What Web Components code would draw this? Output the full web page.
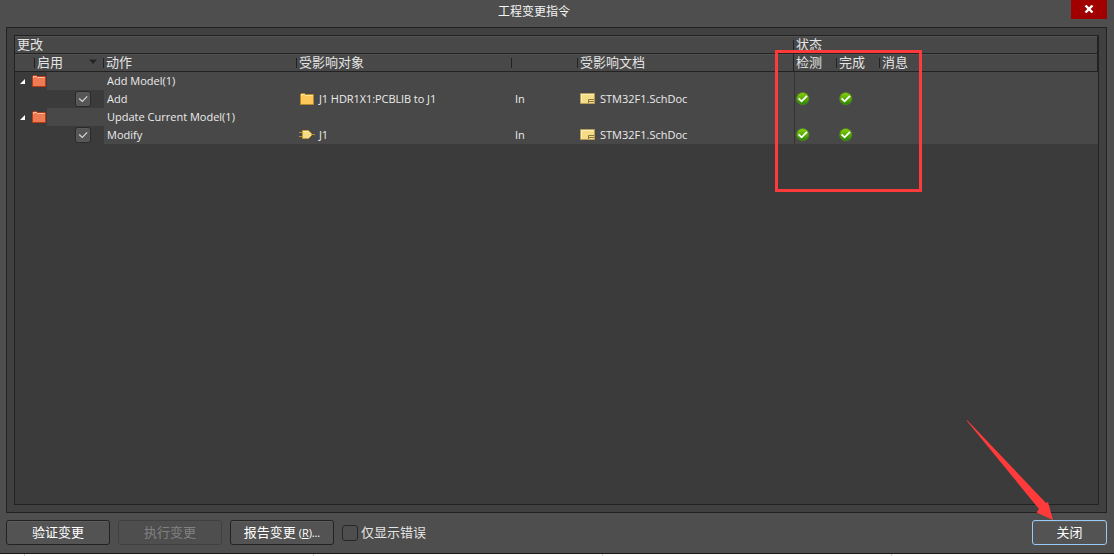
<!DOCTYPE html>
<html lang="zh-CN">
<head>
<meta charset="utf-8">
<title>工程变更指令</title>
<style>
  html, body {
    margin: 0;
    height: 100%;
    overflow: hidden;
  }

  body {
    font-family: "Noto Sans CJK SC", sans-serif;
    font-size: 13px;
    color: #e4e4e4;
    background: #4e4e4e;
  }
</style>
</head>
<body>
<eco-dialog></eco-dialog>

<script>
  const ICONS = {
    folderRed: `<svg width="14" height="12" viewBox="0 0 14 12">
      <path d="M.5 11.5V1.5l1-1h3l1 1h8v10z" fill="#ed7c55" stroke="#b93a16"/>
      <path d="M1.5 3V1.5h3l1 1h7" fill="none" stroke="#ffc0a0"/></svg>`,
    folderYellow: `<svg width="14" height="12" viewBox="0 0 14 12">
      <path d="M.5 11.5v-10l1-1h3l1 1h8v10z" fill="#ffc85a" stroke="#b58a2c"/>
      <path d="M1.5 3V1.5h3l1 1h7" fill="none" stroke="#ffe6a0"/></svg>`,
    part: `<svg width="16" height="10" viewBox="0 0 16 10">
      <path d="M0 2.5h4M0 6.5h4M12 4.5h4" stroke="#b88f2c"/>
      <path d="M3.5.5h6l3 3v2l-3 3h-6z" fill="#f5dc86" stroke="#c49a36"/>
      <path d="M4.5 2V1.5h4" fill="none" stroke="#fff2bc"/></svg>`,
    sheet: `<svg width="15" height="11" viewBox="0 0 15 11">
      <path d="M.5.5h14v10H.5z" fill="#f4db86" stroke="#b49c5c"/>
      <path d="M1.5 9V1.5h12" fill="none" stroke="#fff0b8"/>
      <path d="M8.5 10V6.5H14M9 8.5h5" fill="none" stroke="#8b7440"/></svg>`,
    ok: `<svg width="14" height="14" viewBox="0 0 14 14">
      <defs><linearGradient id="g" x2="0" y2="1"><stop stop-color="#8bd10a"/><stop offset="1" stop-color="#258500"/></linearGradient></defs>
      <circle cx="6.7" cy="6.7" r="6.2" fill="url(#g)" stroke="#4f7f28" stroke-width=".8"/>
      <path d="M2.6 6.3l3 3L11 3.9" fill="none" stroke="#fff" stroke-width="1.8"/></svg>`,
    expanded: `<svg width="5" height="5" viewBox="0 0 5 5"><path d="M5 0v5H0z" fill="#fff"/></svg>`,
    sort: `<svg width="8" height="5" viewBox="0 0 8 5"><path d="M0 .5h8L4 5z" fill="#242424"/></svg>`
  };

  class EcoIcon extends HTMLElement {
    connectedCallback() {
      this.attachShadow({ mode: 'open' }).innerHTML = `
        <style>
          :host { display: inline-flex; flex: none; }
          svg { display: block; }
        </style>
        ${ICONS[this.getAttribute('name')]}
      `;
    }
  }

  class EcoCheck extends HTMLElement {
    connectedCallback() {
      const checked = this.hasAttribute('checked');
      this.attachShadow({ mode: 'open' }).innerHTML = `
        <style>
          :host {
            display: inline-flex;
            flex: none;
            box-sizing: border-box;
            width: 16px;
            height: 16px;
            border: 1px solid #262626;
            border-radius: 3px;
            background: #4e4e4e;
          }
          :host([checked]) {
            border-color: #292929;
            background: #555;
            box-shadow: inset 0 0 0 .5px #626262;
          }
        </style>
        ${checked ? '<svg width="14" height="14" viewBox="0 0 14 14"><path d="M3.2 6.5l3.1 2.9 4.9-5" fill="none" stroke="#d6d6d6" stroke-width="1.2"/></svg>' : ''}
      `;
    }
  }

  class EcoButton extends HTMLElement {
    connectedCallback() {
      this.attachShadow({ mode: 'open' }).innerHTML = `
        <style>
          :host {
            display: flex;
            align-items: center;
            justify-content: center;
            box-sizing: border-box;
            width: 104px;
            height: 25px;
            border: 1px solid #222;
            border-radius: 3px;
            background: #535353;
            box-shadow: inset 0 1px #5d5d5d;
            color: #fff;
          }
          :host([disabled]) {
            border-color: #414141;
            background: #4e4e4e;
            box-shadow: none;
            color: #818181;
          }
          :host([primary]) {
            width: 75px;
            border-color: #99c9f5;
          }
          span {
            height: 25px;
            line-height: 23px;
            white-space: nowrap;
          }
        </style>
        <span><slot></slot></span>
      `;
    }
  }

  // One header cell: a short divider on its left edge, then the caption
  class EcoHead extends HTMLElement {
    connectedCallback() {
      this.attachShadow({ mode: 'open' }).innerHTML = `
        <style>
          :host {
            display: flex;
            align-items: center;
            box-sizing: border-box;
            height: 17px;
            padding-left: 3px;
            line-height: 15px;
            padding-bottom: 2px;
            white-space: nowrap;
            background: linear-gradient(#222, #222) 0 4px / 1px 10px no-repeat;
          }
          :host([plain]) { background: none; padding-left: 2px; }
          :host([full]) { background-size: 1px 17px; background-position: 0 0; }
        </style>
        <slot></slot>
      `;
    }
  }

  class EcoRow extends HTMLElement {
    connectedCallback() {
      const group = this.hasAttribute('group');
      const lead = group
        ? '<eco-icon name="expanded"></eco-icon><eco-icon name="folderRed"></eco-icon>'
        : '<eco-check checked></eco-check>';
      this.attachShadow({ mode: 'open' }).innerHTML = `
        <style>
          :host {
            display: grid;
            grid-template-columns: 89px 193px 215px 65px 217px 43px 43px 1fr;
            height: 18px;
            font-family: "Open Sans", "Noto Sans CJK SC", sans-serif;
            font-size: 11px;
            line-height: 18px;
            color: #ececec;
            background: #484848;
            white-space: nowrap;
          }
          .lead {
            display: flex;
            align-items: center;
            box-sizing: border-box;
            padding-left: 60px;
            background: #3b3b3b;
          }
          :host([group]) .lead {
            width: 32px;
            padding-left: 5px;
            gap: 7px;
          }
          .cell {
            display: flex;
            align-items: center;
            gap: 5px;
            padding-left: 3px;
          }
          .object { letter-spacing: -.08px; }
          .part { padding-left: 2px; gap: 4px; }
          .status { padding-left: 2px; }
          .first { padding-left: 1px; border-left: 1px solid #333; }
          .doc ::slotted(eco-icon) { margin-top: -1px; }
        </style>
        <div class="lead">${lead}</div>
        <div class="cell"><slot></slot></div>
        <div class="cell object ${this.hasAttribute('part') ? 'part' : ''}"><slot name="object"></slot></div>
        <div class="cell"><slot name="relation"></slot></div>
        <div class="cell doc"><slot name="doc"></slot></div>
        <div class="cell status first"><slot name="check"></slot></div>
        <div class="cell status"><slot name="done"></slot></div>
        <div class="cell"></div>
      `;
    }
  }

  class EcoGrid extends HTMLElement {
    connectedCallback() {
      this.attachShadow({ mode: 'open' }).innerHTML = `
        <style>
          :host {
            display: flex;
            flex-direction: column;
            flex: 1;
            border: 1px solid #222;
            background: #3b3b3b;
          }
          .head {
            display: grid;
            height: 17px;
            border-right: 1px solid #222;
            border-bottom: 1px solid #222;
            background: #484848;
            box-shadow: inset 0 1px #525252;
          }
          .bands { grid-template-columns: 778px 1fr; }
          .columns { grid-template-columns: 19px 69px 193px 215px 66px 216px 43px 43px 1fr; }
          .sort { margin-left: auto; margin-right: 6px; }
        </style>
        <div class="head bands">
          <eco-head plain>更改</eco-head>
          <eco-head>状态</eco-head>
        </div>
        <div class="head columns">
          <eco-head plain></eco-head>
          <eco-head>启用<eco-icon class="sort" name="sort"></eco-icon></eco-head>
          <eco-head>动作</eco-head>
          <eco-head>受影响对象</eco-head>
          <eco-head></eco-head>
          <eco-head>受影响文档</eco-head>
          <eco-head full>检测</eco-head>
          <eco-head>完成</eco-head>
          <eco-head>消息</eco-head>
        </div>
        <slot></slot>
      `;
    }
  }

  class EcoDialog extends HTMLElement {
    connectedCallback() {
      this.attachShadow({ mode: 'open' }).innerHTML = `
        <style>
          :host {
            display: flex;
            flex-direction: column;
            position: relative;
            height: 556px;
          }
          header {
            display: grid;
            grid-template-columns: 1fr auto 1fr;
            height: 27px;
            font-size: 12px;
            line-height: 22px;
            color: #f4f4f4;
          }
          .title { grid-column: 2; padding-right: 46px; }
          .close {
            justify-self: end;
            display: flex;
            align-items: center;
            justify-content: center;
            width: 36px;
            height: 19px;
            margin-right: 7px;
            background: #a00000;
          }
          .panel {
            display: flex;
            box-sizing: border-box;
            height: 486px;
            margin: 0 7px 0 6px;
            padding: 7px;
            border: 1px solid #222;
            background: #404040;
          }
          footer {
            display: flex;
            align-items: center;
            gap: 8px;
            height: 25px;
            padding: 7px 7px 8px 6px;
            border-bottom: 1px solid #191919;
          }
          label {
            display: flex;
            align-items: center;
            gap: 3px;
          }
          label span { height: 25px; line-height: 23px; }
          .primary { margin-left: auto; }
          small { font: 11px "Open Sans", sans-serif; letter-spacing: -.1px; }
          .below {
            flex: 1;
            background: repeating-linear-gradient(90deg, transparent 0 24px, #d8d8d0 24px 25px, transparent 25px 289px) #fffdf9;
          }
          .mark {
            position: absolute;
            box-sizing: border-box;
            left: 775px;
            top: 50px;
            width: 147px;
            height: 142px;
            border: 3px solid #ff3a3a;
          }
          .arrow { position: absolute; left: 960px; top: 415px; }
        </style>
        <header>
          <div class="title">工程变更指令</div>
          <div class="close">
            <svg width="10" height="10" viewBox="0 0 10 10"><path d="M1.5 .5l7 7M8.5 .5l-7 7" stroke="#fff" stroke-width="2.4"/></svg>
          </div>
        </header>
        <div class="panel">
          <eco-grid>
            <eco-row group>Add Model(1)</eco-row>
            <eco-row>Add
              <eco-icon slot="object" name="folderYellow"></eco-icon><span slot="object">J1 HDR1X1:PCBLIB to J1</span>
              <span slot="relation">In</span>
              <eco-icon slot="doc" name="sheet"></eco-icon><span slot="doc">STM32F1.SchDoc</span>
              <eco-icon slot="check" name="ok"></eco-icon>
              <eco-icon slot="done" name="ok"></eco-icon>
            </eco-row>
            <eco-row group>Update Current Model(1)</eco-row>
            <eco-row part>Modify
              <eco-icon slot="object" name="part"></eco-icon><span slot="object">J1</span>
              <span slot="relation">In</span>
              <eco-icon slot="doc" name="sheet"></eco-icon><span slot="doc">STM32F1.SchDoc</span>
              <eco-icon slot="check" name="ok"></eco-icon>
              <eco-icon slot="done" name="ok"></eco-icon>
            </eco-row>
          </eco-grid>
        </div>
        <footer>
          <eco-button>验证变更</eco-button>
          <eco-button disabled>执行变更</eco-button>
          <eco-button>报告变更 <small>(<u>R</u>)...</small></eco-button>
          <label><eco-check></eco-check><span>仅显示错误</span></label>
          <eco-button class="primary" primary>关闭</eco-button>
        </footer>
        <div class="below"></div>
        <div class="mark"></div>
        <svg class="arrow" width="100" height="110" viewBox="0 0 100 110">
          <path d="M6.5 5.5L7.5 5.5 86 88 88 87 93 105 76.5 97.5 79 94z" fill="#ff3a3a"/>
        </svg>
      `;
    }
  }

  customElements.define('eco-icon', EcoIcon);
  customElements.define('eco-check', EcoCheck);
  customElements.define('eco-button', EcoButton);
  customElements.define('eco-head', EcoHead);
  customElements.define('eco-row', EcoRow);
  customElements.define('eco-grid', EcoGrid);
  customElements.define('eco-dialog', EcoDialog);
</script>
</body>
</html>
